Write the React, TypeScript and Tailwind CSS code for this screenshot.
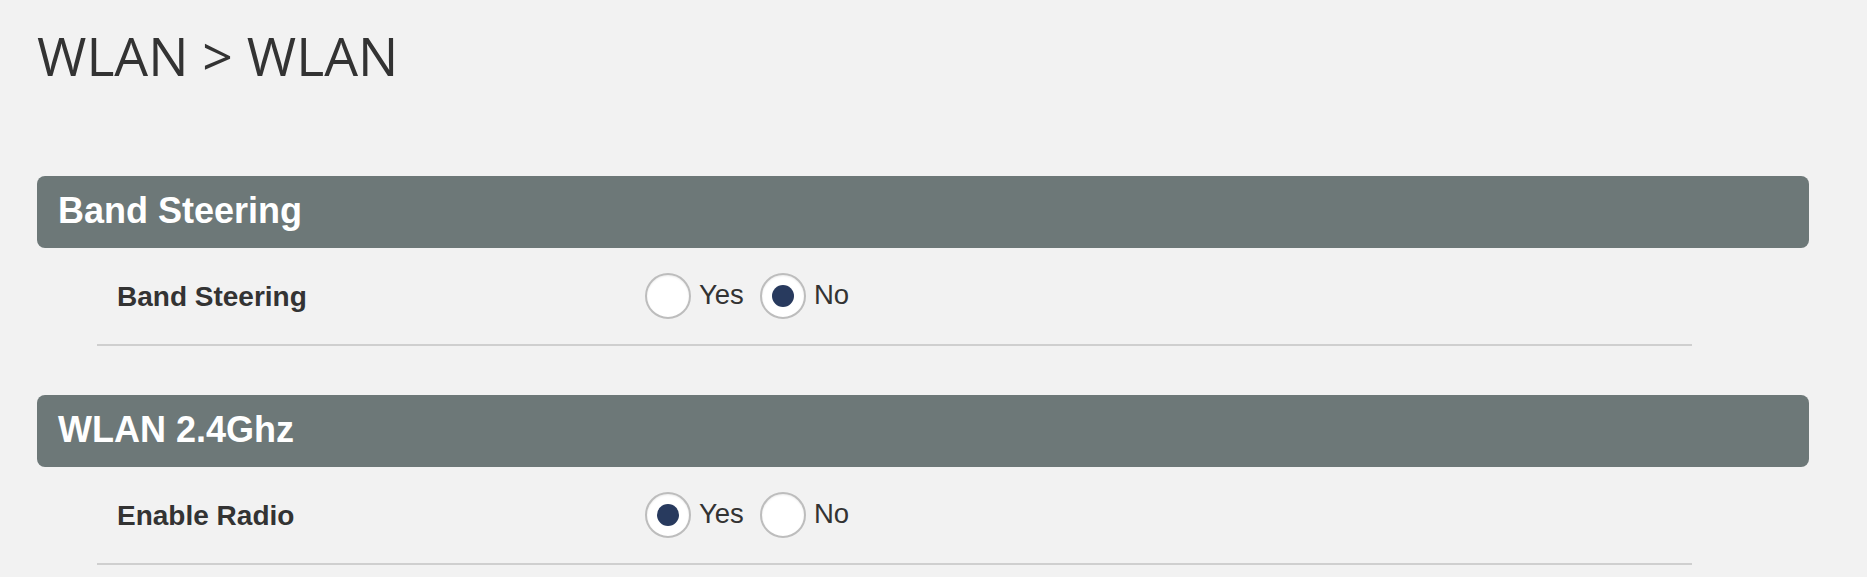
import React from "react";

function Radio({ checked, label }: { checked: boolean; label: string }) {
  return (
    <div className="flex items-center">
      <div className="w-[46px] h-[46px] rounded-full bg-white border-2 border-[#bdbdbd] flex items-center justify-center shadow-[inset_0_1px_2px_rgba(0,0,0,0.08)]">
        {checked && <div className="w-[22px] h-[22px] rounded-full bg-[#283a5e]" />}
      </div>
      <span className="ml-[8px] text-[27.5px] leading-none text-[#333] pb-[2px]">{label}</span>
    </div>
  );
}

function Section({ title, label, yes }: { title: string; label: string; yes: boolean }) {
  return (
    <div>
      <div className="h-[72px] rounded-[8px] bg-[#6d7878] flex items-center pl-[21px]">
        <span className="text-white font-bold text-[36px] leading-none pb-[3px]">{title}</span>
      </div>
      <div className="ml-[60px] w-[1595px] h-[98px] border-b-2 border-[#cfcfcf] flex items-center">
        <div className="w-[548px] pl-[20px] font-bold text-[28px] leading-none text-[#333] pt-[2px]">{label}</div>
        <div className="flex items-center gap-[16px]">
          <Radio checked={yes} label="Yes" />
          <Radio checked={!yes} label="No" />
        </div>
      </div>
    </div>
  );
}

export default function App() {
  return (
    <div
      className="w-[1867px] h-[577px] bg-[#f2f2f2] overflow-hidden pl-[37px] pr-[58px]"
      style={{ fontFamily: '"Liberation Sans", Arial, sans-serif' }}
    >
      <h1
        className="text-[53.5px] leading-none text-[#333] pt-[29px] h-[176px]"
        style={{ fontFamily: '"Open Sans", sans-serif' }}
      >
        WLAN &gt; WLAN
      </h1>
      <div className="flex flex-col gap-[49px]">
        <Section title="Band Steering" label="Band Steering" yes={false} />
        <Section title="WLAN 2.4Ghz" label="Enable Radio" yes={true} />
      </div>
    </div>
  );
}
